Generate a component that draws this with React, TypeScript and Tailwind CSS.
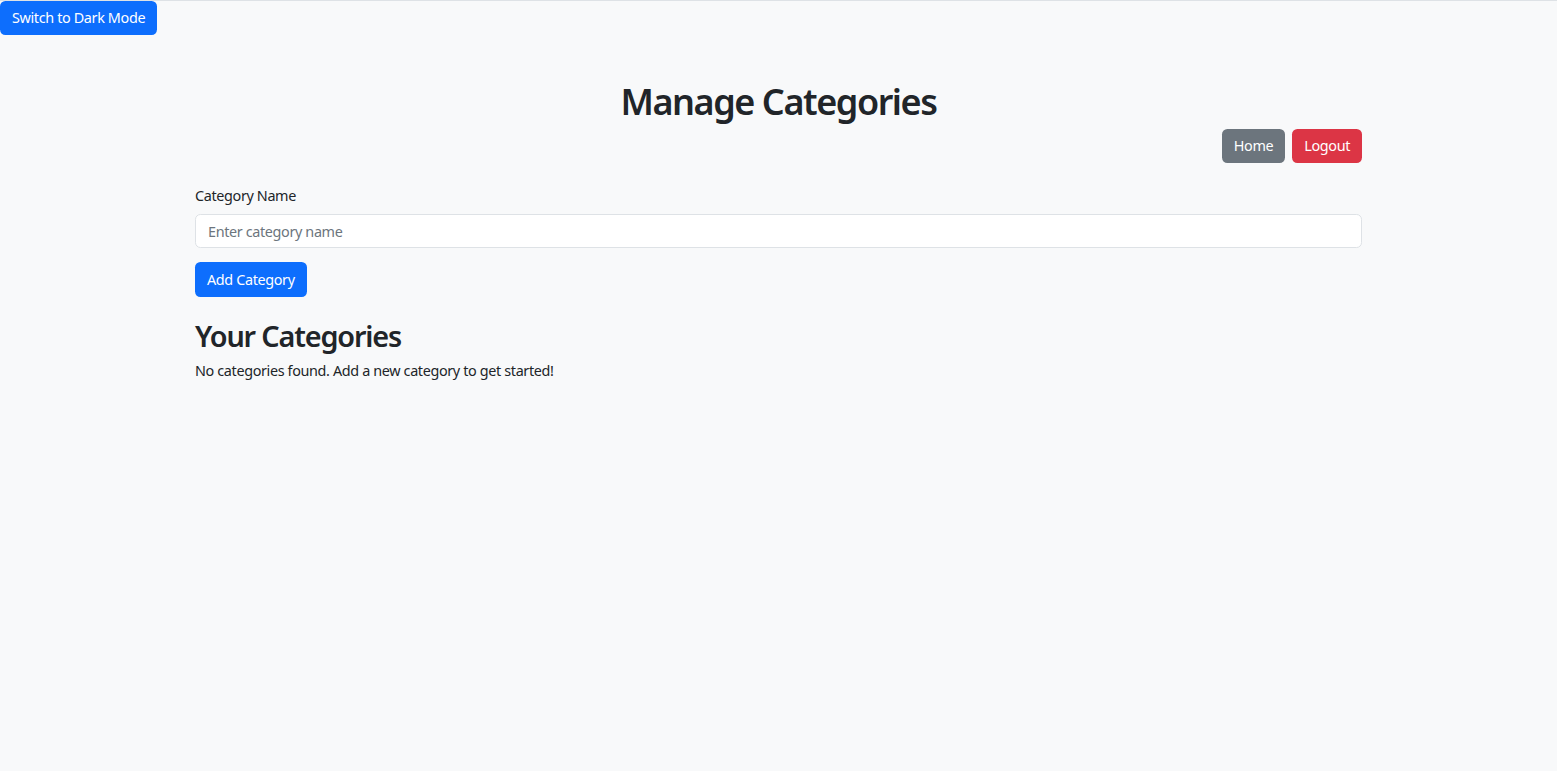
const font = { fontFamily: '"Noto Sans", "Open Sans", sans-serif' };

export default function App() {
  return (
    <div
      className="min-h-screen bg-[#f8f9fa] border-t border-[#dee2e6] text-[#212529] text-[14.4px] leading-[1.5] tracking-[-0.025em]"
      style={font}
    >
      {/* theme toggle */}
      <button className="h-[34px] px-[12px] rounded-[5.4px] bg-[#0d6efd] text-white text-[14.4px]">
        Switch to Dark Mode
      </button>

      <div className="w-[1167px] mx-auto mt-[45px]">
        {/* header */}
        <h1 className="text-center text-[36px] leading-[43px] font-semibold tracking-[-0.04em]">
          Manage Categories
        </h1>
        <div className="flex justify-end gap-[7px] mt-[6px]">
          <button className="h-[34px] px-[12px] rounded-[5.4px] bg-[#6c757d] text-white text-[14.4px]">
            Home
          </button>
          <button className="h-[34px] px-[12px] rounded-[5.4px] bg-[#dc3545] text-white text-[14.4px]">
            Logout
          </button>
        </div>

        {/* form */}
        <form className="mt-[22px]" onSubmit={(e) => e.preventDefault()}>
          <label className="block h-[22px] leading-[22px] mb-[7px]">Category Name</label>
          <input
            type="text"
            placeholder="Enter category name"
            className="block w-full h-[34px] px-[12px] bg-white border border-[#dee2e6] rounded-[5.4px] text-[14.4px] placeholder:text-[#6c757d] outline-none"
          />
          <button className="mt-[14px] h-[35px] px-[12px] rounded-[5.4px] bg-[#0d6efd] text-white text-[14.4px]">
            Add Category
          </button>
        </form>

        {/* list */}
        <h2 className="mt-[22px] text-[28.8px] leading-[34px] font-semibold tracking-[-0.04em]">
          Your Categories
        </h2>
        <p className="mt-[7px] leading-[22px]">No categories found. Add a new category to get started!</p>
      </div>
    </div>
  );
}
